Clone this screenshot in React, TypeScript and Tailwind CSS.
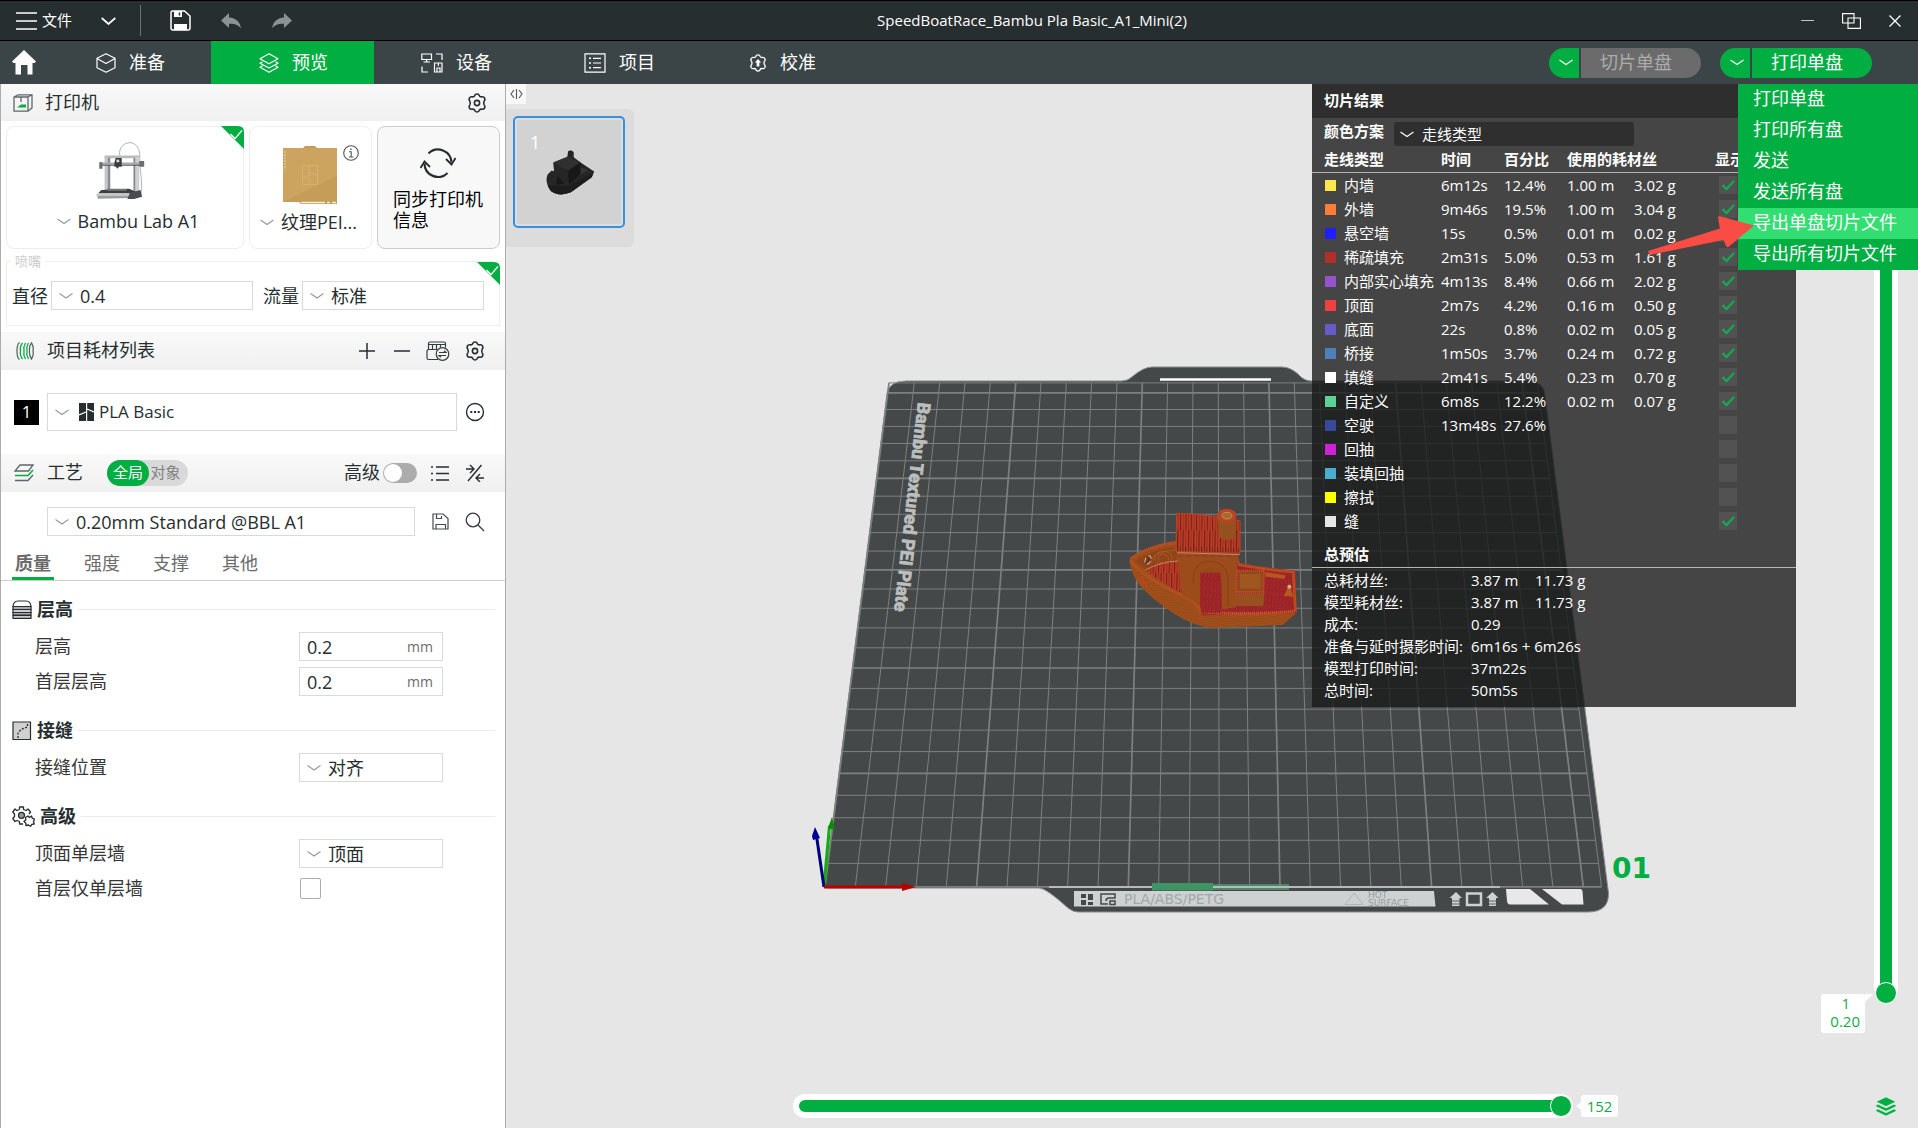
import type {ReactNode} from 'react';
import clsx from 'clsx';

const printMenu = ['打印单盘', '打印所有盘', '发送', '发送所有盘', '导出单盘切片文件', '导出所有切片文件'];

const lineTypes = [
    {name: '内墙', color: '#ffe64d', time: '6m12s', percent: '12.4%', length: '1.00 m', weight: '3.02 g', shown: true},
    {name: '外墙', color: '#ff7d38', time: '9m46s', percent: '19.5%', length: '1.00 m', weight: '3.04 g', shown: true},
    {name: '悬空墙', color: '#1f1fff', time: '15s', percent: '0.5%', length: '0.01 m', weight: '0.02 g', shown: true},
    {name: '稀疏填充', color: '#b03029', time: '2m31s', percent: '5.0%', length: '0.53 m', weight: '1.61 g', shown: true},
    {name: '内部实心填充', color: '#9654cc', time: '4m13s', percent: '8.4%', length: '0.66 m', weight: '2.02 g', shown: true},
    {name: '顶面', color: '#f04040', time: '2m7s', percent: '4.2%', length: '0.16 m', weight: '0.50 g', shown: true},
    {name: '底面', color: '#665cc7', time: '22s', percent: '0.8%', length: '0.02 m', weight: '0.05 g', shown: true},
    {name: '桥接', color: '#4d80ba', time: '1m50s', percent: '3.7%', length: '0.24 m', weight: '0.72 g', shown: true},
    {name: '填缝', color: '#ffffff', time: '2m41s', percent: '5.4%', length: '0.23 m', weight: '0.70 g', shown: true},
    {name: '自定义', color: '#5ed194', time: '6m8s', percent: '12.2%', length: '0.02 m', weight: '0.07 g', shown: true},
    {name: '空驶', color: '#38489b', time: '13m48s', percent: '27.6%', length: '', weight: '', shown: false},
    {name: '回抽', color: '#cd22d6', time: '', percent: '', length: '', weight: '', shown: false},
    {name: '装填回抽', color: '#49adcf', time: '', percent: '', length: '', weight: '', shown: false},
    {name: '擦拭', color: '#ffff00', time: '', percent: '', length: '', weight: '', shown: false},
    {name: '缝', color: '#e6e6e6', time: '', percent: '', length: '', weight: '', shown: true},
];

const totals = [
    ['总耗材丝:', '3.87 m', '11.73 g'],
    ['模型耗材丝:', '3.87 m', '11.73 g'],
    ['成本:', '0.29', ''],
    ['准备与延时摄影时间:', '6m16s + 6m26s', ''],
    ['模型打印时间:', '37m22s', ''],
    ['总时间:', '50m5s', ''],
];

const GEAR_PATH =
    'M7.6 2.8 Q8 1 10 1 Q12 1 12.4 2.8 Q13.2 4.1 14.7 3.8 Q16.6 3.3 17.6 5 Q18.5 6.7 17.2 8 Q16.2 10 17.2 12 Q18.5 13.3 17.6 15 Q16.6 16.7 14.7 16.2 Q13.2 15.9 12.4 17.2 Q12 19 10 19 Q8 19 7.6 17.2 Q6.8 15.9 5.3 16.2 Q3.4 16.7 2.4 15 Q1.5 13.3 2.8 12 Q3.8 10 2.8 8 Q1.5 6.7 2.4 5 Q3.4 3.3 5.3 3.8 Q6.8 4.1 7.6 2.8 Z';

function Chevron({className}: {className?: string}) {
    return (
        <svg viewBox="0 0 14 7" className={clsx('h-[7px] w-3.5 shrink-0', className)} fill="none" stroke="currentColor" strokeWidth="1.2">
            <path d="M.5 1 L7 5.5 L13.5 1" />
        </svg>
    );
}

function Gear({className}: {className?: string}) {
    return (
        <svg viewBox="0 0 20 20" className={clsx('size-5 shrink-0', className)} fill="none" stroke="currentColor" strokeWidth="1.6" strokeLinejoin="round">
            <path d={GEAR_PATH} />
            <circle cx="10" cy="10" r="2.6" />
        </svg>
    );
}

function CornerCheck({className}: {className?: string}) {
    return (
        <svg viewBox="0 0 23 23" className={clsx('absolute size-[23px]', className)}>
            <path d="M0 0 H17 Q23 0 23 6 V23 Z" fill="#00ae42" />
            <path d="M9.5 8 L14 12.5 L21 4.5" fill="none" stroke="#fff" strokeWidth="1.2" />
        </svg>
    );
}

function Select({id, label, value, className}: {id: string; label: string; value: string; className?: string}) {
    return (
        <div className={clsx('relative h-[29px] text-lg', className)}>
            <select id={id} aria-label={label} defaultValue={value} className="size-full appearance-none border border-[#d9d9d9] bg-white pr-2 pl-7 text-[#262e30] outline-none">
                <option>{value}</option>
            </select>
            <Chevron className="pointer-events-none absolute top-1/2 left-2 -translate-y-1/2 text-[#9a9a9a]" />
        </div>
    );
}

function TitleBar() {
    return (
        <header className="flex h-[41px] items-center border-y border-black bg-[#262e30] text-white">
            <div className="flex h-full w-[292px] items-center">
                <button className="ml-4 flex items-center gap-[5px] text-[15px]">
                    <svg viewBox="0 0 21 18" className="h-[18px] w-[21px]" stroke="#fff" strokeWidth="1.6">
                        <path d="M0 1 H21 M0 9 H21 M0 17 H21" />
                    </svg>
                    文件
                </button>
                <button aria-label="更多" className="ml-[29px]">
                    <svg viewBox="0 0 15 8" className="h-2 w-[15px]" fill="none" stroke="#fff" strokeWidth="1.7"><path d="M.7 1 L7.5 7 L14.3 1" /></svg>
                </button>
                <div className="ml-6 h-[31px] w-px bg-[#6b7173]" />
                <button aria-label="保存" className="ml-[29px]">
                    <svg viewBox="0 0 21 21" className="size-[21px]" fill="none" stroke="#fff" strokeWidth="1.5">
                        <path d="M2.5 1 H14.5 L20 6 V18 Q20 20 18 20 H3 Q1 20 1 18 V2.5 Q1 1 2.5 1 Z" />
                        <path d="M4 1 H12 V7 H4 Z M4 14 H17 V20 H4 Z" fill="#fff" stroke="none" />
                        <path d="M9.5 2.5 V5.5" stroke="#262e30" />
                    </svg>
                </button>
                <button aria-label="撤销" className="ml-[30px]">
                    <svg viewBox="0 0 20 16" className="h-4 w-5" fill="#8d9293"><path d="M8 0 V4.5 C15 5 19 9 20 15.5 C17 11.5 13 10.5 8 10.7 V15 L0 7.5 Z" /></svg>
                </button>
                <button aria-label="重做" className="ml-[31px]">
                    <svg viewBox="0 0 20 16" className="h-4 w-5" fill="#8d9293"><path d="M12 0 V4.5 C5 5 1 9 0 15.5 C3 11.5 7 10.5 12 10.7 V15 L20 7.5 Z" /></svg>
                </button>
            </div>
            <h1 className="flex-1 text-center text-[15px]">SpeedBoatRace_Bambu Pla Basic_A1_Mini(2)</h1>
            <div className="flex w-[146px] items-center justify-end gap-7 pr-[17px]">
                <button aria-label="最小化" className="h-px w-[13px] bg-[#c3c6c7]" />
                <button aria-label="还原">
                    <svg viewBox="0 0 19 16" className="h-4 w-[19px]" fill="none" stroke="#fff" strokeWidth="1.1"><path d="M.6 .6 H12 V10 H.6 Z M6 5 H18.4 V15.4 H6 Z" /></svg>
                </button>
                <button aria-label="关闭">
                    <svg viewBox="0 0 12 12" className="size-3" stroke="#fff" strokeWidth="1.3"><path d="M.5 .5 L11.5 11.5 M11.5 .5 L.5 11.5" /></svg>
                </button>
            </div>
        </header>
    );
}

function NavTab({label, active, children}: {label: string; active?: boolean; children: ReactNode}) {
    return (
        <button className={clsx('flex w-[163px] items-center justify-center gap-[13px] pl-0.5 text-lg', active && 'bg-[#00ae42]')}>
            {children}
            <span className="pb-0.5">{label}</span>
        </button>
    );
}

function NavBar() {
    return (
        <nav className="flex h-[43px] bg-[#3b4446] text-white">
            <button aria-label="主页" className="w-12 pl-3">
                <svg viewBox="0 0 24 25" className="h-[25px] w-6" fill="#fff"><path d="M12 0 L24 11.5 L22.5 13 H20.5 V24.5 H15.5 V15 H9 V24.5 H3.5 V13 H1.5 L0 11.5 Z" /></svg>
            </button>
            <NavTab label="准备">
                <svg viewBox="0 0 20 20" className="size-5" fill="none" stroke="currentColor" strokeWidth="1.2" strokeLinejoin="round">
                    <path d="M10 .7 L19 5.2 V14.8 L10 19.3 L1 14.8 V5.2 Z M1 5.4 L10 10.5 L19 5.4" />
                </svg>
            </NavTab>
            <NavTab label="预览" active>
                <svg viewBox="0 0 20 20" className="size-5" fill="none" stroke="currentColor" strokeWidth="1.2" strokeLinejoin="round">
                    <path d="M10 .8 L19 5.8 L10 10.8 L1 5.8 Z M3.5 8.8 L1 10.2 L10 15 L19 10.2 L16.5 8.8 M3.5 12.8 L1 14.3 L10 19.2 L19 14.3 L16.5 12.8" />
                </svg>
            </NavTab>
            <NavTab label="设备">
                <svg viewBox="0 0 22 20" className="h-5 w-[22px]" fill="none" stroke="currentColor" strokeWidth="1.2">
                    <path d="M.8 1 H10.5 V6.5 H.8 Z M5.6 6.5 V9 M2.5 9 H9 M15 1 H21 V7 M1 13.5 V19 H7 M13.5 10 H21 V19 H13.5 Z M16 19 V15 H19 V19 M17.3 10 V13" />
                </svg>
            </NavTab>
            <NavTab label="项目">
                <svg viewBox="0 0 22 20" className="h-5 w-[22px]" fill="none" stroke="currentColor" strokeWidth="1.2">
                    <path d="M1 .8 H21 V19.2 H1 Z M9 5.3 H17 M9 10 H17 M9 14.7 H17" />
                    <path d="M5 5.3 H7 M5 10 H7 M5 14.7 H7" strokeWidth="1.6" />
                </svg>
            </NavTab>
            <NavTab label="校准">
                <svg viewBox="0 0 20 20" className="size-[18px]" fill="none" stroke="currentColor" strokeWidth="1.5" strokeLinejoin="round">
                    <path d={GEAR_PATH} />
                    <path d="M10 5.5 L13.5 9.5 H11.5 V14 H8.5 V9.5 H6.5 Z" fill="currentColor" stroke="none" />
                </svg>
            </NavTab>
            <div className="ml-auto flex items-center gap-[19px] pr-[46px] text-lg">
                <div className="flex h-[30px] gap-0.5">
                    <button aria-label="切片选项" className="flex w-[30px] items-center justify-center rounded-l-full bg-[#00ae42] pl-1"><Chevron /></button>
                    <button disabled className="w-[120px] rounded-r-full bg-[#6b6b6b] pr-2.5 pb-0.5 text-[#acacac]">切片单盘</button>
                </div>
                <div className="relative flex h-[30px] gap-0.5">
                    <button aria-label="打印选项" className="flex w-[30px] items-center justify-center rounded-l-full bg-[#00ae42] pl-1"><Chevron /></button>
                    <button className="w-[120px] rounded-r-full bg-[#00ae42] pr-2.5 pb-0.5">打印单盘</button>
                    <PrintMenu />
                </div>
            </div>
        </nav>
    );
}

function PrintMenu() {
    return (
        <div className="absolute top-9 -right-[46px] z-20 w-[180px] bg-[#00ae42]">
            <ul>
                {printMenu.map((item) => (
                    <li key={item}>
                        <button className={clsx('h-[31px] w-full pb-0.5 pl-[15px] text-left', item === '导出单盘切片文件' && 'bg-[#32de72]')}>{item}</button>
                    </li>
                ))}
            </ul>
            <svg viewBox="0 0 106 40" className="absolute top-[132px] -left-[90px] h-10 w-[106px]">
                <path d="M0 35 L72 12.5 L70 1.5 Q70 -.5 73 .5 L106 9.5 L81 30.5 Q79 32 78 30 L75.5 24 L1.5 39 Z" fill="#f84c44" />
            </svg>
        </div>
    );
}

function PanelHeader({children, className}: {children: ReactNode; className?: string}) {
    return (
        <div className={clsx('flex items-center bg-linear-to-b from-[#f9f9f9] to-[#f0f0f0] text-lg', className)}>{children}</div>
    );
}

function PrinterPicture() {
    return (
        <svg viewBox="235 425 120 175" preserveAspectRatio="none" className="mr-2.5 h-[58px] w-[49px]">
            <path d="M293 466 C290 440 305 427 318 427 C336 428 344 450 342 475 C343 520 350 550 345 580" fill="none" stroke="#777" strokeWidth="1.5" />
            <path d="M256 466 H342 V474 H256 Z" fill="#b9babd" />
            <path d="M256 470 H269 V578 H256 Z" fill="#c5c6c9" />
            <path d="M264 472 H270 V572 H264 Z" fill="#8b8c90" />
            <path d="M327 470 H341 V578 H327 Z" fill="#cfd0d3" />
            <path d="M327 472 H331 V572 H327 Z" fill="#85868a" />
            <path d="M245 487 H352 V494 H245 Z" fill="#a8a9ad" />
            <path d="M245 494 H350 V497 H245 Z" fill="#55565a" />
            <path d="M243 486 H251 V506 H243 Z M341 482 H353 V500 H341 Z" fill="#6c6d71" />
            <path d="M283 473 H298 V500 H290 V504 H285 V500 H280 V488 Z" fill="#3a3b3f" />
            <path d="M285 478 H292 V486 H285 Z" fill="#d8d8da" />
            <path d="M248 570 L316 566 L332 574 V580 H240 Z" fill="#3e3f43" />
            <path d="M262 566 H310 V572 H262 Z" fill="#77787c" />
            <path d="M236 581 H326 V594 L240 596 Z" fill="#9c9da1" />
            <path d="M236 583 H322 V587 H236 Z" fill="#d4d5d8" />
            <path d="M318 578 L344 570 L348 590 L328 597 H312 Z" fill="#4b4c50" />
        </svg>
    );
}

function PrinterCards() {
    return (
        <div className="flex h-[128px] gap-[5px] px-[5px] pt-[5px] text-lg text-[#262e30]">
            <div className="relative flex flex-1 flex-col items-center rounded-lg border border-[#eee] pt-[15px]">
                <PrinterPicture />
                <button className="mt-[7px] flex items-center gap-[7px] pl-1.5"><Chevron className="text-[#9a9a9a]" />Bambu Lab A1</button>
                <CornerCheck className="-top-px -right-px" />
            </div>
            <div className="relative flex w-[123px] flex-col items-center rounded-lg border border-[#eee] pt-[19px]">
                <svg viewBox="0 0 54 58" className="mr-0.5 h-[58px] w-[54px]">
                    <path d="M0 2 H20 L22 0 H32 L34 2 H54 V58 H18 L16 56 H0 Z" fill="#c59c58" />
                    <path d="M0 2 H54 V30 L0 56 Z" fill="#d2aa66" opacity=".55" />
                    <path d="M19.5 19.5 H34.5 V38.5 H19.5 Z M26 19.5 V38.5 M19.5 33 L26 29 M26 26 L34.5 30" fill="none" stroke="#d8b87c" strokeWidth=".7" />
                    <path d="M18 56.5 H42 M44 56.5 H47 M49 56.5 H53" stroke="#f6ecd8" strokeWidth="1.5" />
                    <path d="M2 5 V24" stroke="#e8d2a6" strokeWidth="1" strokeDasharray="2 1" />
                </svg>
                <svg viewBox="0 0 16 16" className="absolute top-[18px] right-3 size-4" fill="none" stroke="#555" strokeWidth="1.1">
                    <circle cx="8" cy="8" r="7.3" />
                    <path d="M6 6.8 H8.2 V12 M6 12 H10.5" />
                    <path d="M7.2 4.3 H8.6" strokeWidth="1.6" />
                </svg>
                <button className="mt-1 flex items-center gap-[7px] pr-1 whitespace-nowrap"><Chevron className="text-[#9a9a9a]" />纹理PEI...</button>
            </div>
            <button className="flex w-[123px] flex-col rounded-lg border border-[#ccc] bg-[#f8f8f8] px-[15px] pt-[21px] text-left leading-[21px] text-black">
                <svg viewBox="0 0 36 30" className="mb-[11px] ml-[27px] h-[30px] w-9" fill="none" stroke="#262e30" strokeWidth="2.2">
                    <path d="M8.5 5.5 A13.5 13.5 0 0 1 31.5 14.5" />
                    <path d="M27.5 25 A13.5 13.5 0 0 1 4.5 15.5" />
                    <path d="M26 11 L31.5 16.5 L35.5 10 M10 19 L4.5 13.5 L.5 20" strokeWidth="1.8" />
                </svg>
                同步打印机信息
            </button>
        </div>
    );
}

function SectionTitle({title, children}: {title: string; children: ReactNode}) {
    return (
        <h3 className="flex h-10 items-center gap-[5px] pr-[10px] pl-[11px] text-lg font-bold">
            {children}
            {title}
            <span className="h-px flex-1 bg-[#ececec]" />
        </h3>
    );
}

function Field({id, label, children}: {id: string; label: string; children: ReactNode}) {
    return (
        <div className="flex h-[35px] items-center pl-[34px]">
            <label htmlFor={id} className="w-[264px] pb-0.5 text-lg text-[#363636]">{label}</label>
            {children}
        </div>
    );
}

function NumberField({id, label}: {id: string; label: string}) {
    return (
        <Field id={id} label={label}>
            <div className="flex h-[29px] w-36 items-center border border-[#d9d9d9] pr-[9px] pl-[7px]">
                <input id={id} defaultValue="0.2" className="min-w-0 flex-1 text-lg outline-none" />
                <span className="text-sm text-[#6b6b6b]">mm</span>
            </div>
        </Field>
    );
}

function Sidebar() {
    return (
        <aside className="w-[506px] shrink-0 border-r border-l border-[#acacac] bg-white text-[#262e30]">
            <PanelHeader className="h-[37px] pr-[18px] pl-3">
                <svg viewBox="0 0 20 18" className="mr-3 h-[18px] w-5" fill="none" stroke="#5f6668" strokeWidth="1.3">
                    <path d="M1 3 L5 .8 H19 V14 L15 17.2 H1 Z M1 3 H15 V17 M15 3 L19 .8 M8 3 V8" />
                    <path d="M6 12 L8 10.5 H13 V13.5 H4 Z" fill="#00ae42" stroke="none" />
                </svg>
                <h2 className="pb-0.5">打印机</h2>
                <button aria-label="打印机设置" className="ml-auto"><Gear /></button>
            </PanelHeader>
            <PrinterCards />
            <fieldset className="relative mx-[5px] mt-1 h-[73px] border border-[#eee]">
                <legend className="ml-1 px-1 text-[13px] leading-4 text-[#ccc]">喷嘴</legend>
                <div className="flex items-center pt-3 pl-[5px] text-lg">
                    <label htmlFor="diameter">直径</label>
                    <Select id="diameter" label="直径" value="0.4" className="ml-[3px] w-[202px]" />
                    <label htmlFor="flow" className="ml-2.5">流量</label>
                    <Select id="flow" label="流量" value="标准" className="ml-[3px] w-[182px]" />
                </div>
                <CornerCheck className="-top-[7px] -right-px" />
            </fieldset>
            <PanelHeader className="mt-1.5 h-[38px] pr-5 pl-[15px]">
                <svg viewBox="0 0 18 18" className="mr-[13px] size-[18px]" fill="none" stroke="#5f6668" strokeWidth="1.3">
                    <path d="M3.5 .5 Q1 2 1 9 Q1 16 3.5 17.5" />
                    <path d="M15.5 .8 Q18 5 17 9 Q18 13 15.5 17.2 Q13 13 13.5 9 Q13 4 15.5 .8 Z" />
                    <path d="M6.5 1 Q3.5 5 4.5 9 Q3.5 13 6.5 17 M9.5 1 Q7 5 8 9 Q7 13 9.5 17 M12.5 1 Q10 5 11 9 Q10 13 12.5 17" stroke="#00ae42" />
                </svg>
                <h2 className="pb-0.5">项目耗材列表</h2>
                <div className="ml-auto flex items-center gap-4">
                    <button aria-label="添加耗材" className="mr-[3px]"><svg viewBox="0 0 16 16" className="size-4" stroke="#262e30" strokeWidth="1.5"><path d="M0 8 H16 M8 0 V16" /></svg></button>
                    <button aria-label="移除耗材"><svg viewBox="0 0 16 16" className="size-4" stroke="#262e30" strokeWidth="1.5"><path d="M0 8 H16" /></svg></button>
                    <button aria-label="同步耗材">
                        <svg viewBox="0 0 24 20" className="h-5 w-6" fill="none" stroke="#363c3e" strokeWidth="1.2">
                            <path d="M2.5 8.5 V2.5 Q2.5 1 4 1 H18 Q19.5 1 19.5 2.5 V6.5 M1 17 V10.5 Q1 8.5 3 8.5 H11 M1 17 Q1 18.5 2.5 18.5 H12 M6.5 3.5 V8.5 M10.5 3.5 V8.5 M14.5 3.5 V6.5 M2.5 3.5 H19.5" />
                            <circle cx="16.5" cy="13" r="6.3" />
                            <path d="M13 11.5 H20 L18 9.7 M20 14.5 H13 L15 16.3" />
                        </svg>
                    </button>
                    <button aria-label="耗材设置" className="-ml-px"><Gear /></button>
                </div>
            </PanelHeader>
            <div className="flex h-[84px] items-center pr-5 pl-[13px]">
                <span className="size-[25px] bg-black text-center text-[17px] leading-[23px] text-white">1</span>
                <div className="relative ml-2 h-[38px] flex-1">
                    <select aria-label="耗材" defaultValue="PLA Basic" className="size-full appearance-none border border-[#d9d9d9] bg-white pl-[51px] text-[17px]">
                        <option>PLA Basic</option>
                    </select>
                    <Chevron className="pointer-events-none absolute top-4 left-2 text-[#9a9a9a]" />
                    <svg viewBox="0 0 15 18" className="pointer-events-none absolute top-2.5 left-8 h-[18px] w-[15px]">
                        <path d="M0 0 H7 V18 H0 Z M8.2 0 H15 V18 H8.2 Z" fill="#262e30" />
                        <path d="M0 12 L7 9 M8 6 L15 9" stroke="#fff" strokeWidth="1.3" />
                    </svg>
                </div>
                <button aria-label="编辑耗材" className="ml-2">
                    <svg viewBox="0 0 20 20" className="size-5" fill="none" stroke="#262e30" strokeWidth="1.4">
                        <circle cx="10" cy="10" r="8.5" />
                        <path d="M5.3 10 H7.3 M9 10 H11 M12.7 10 H14.7" strokeWidth="1.8" />
                    </svg>
                </button>
            </div>
            <PanelHeader className="h-[38px] pr-5 pl-[13px]">
                <svg viewBox="0 0 20 18" className="mr-[13px] h-[18px] w-5" fill="none" stroke="#5f6668" strokeWidth="1.3">
                    <path d="M6 1 H19 L14.5 7 H1 Z" />
                    <path d="M1 11.5 H14 L19 6" stroke="#00ae42" strokeWidth="1.6" />
                    <path d="M1 16.5 H14 L19 11" />
                </svg>
                <h2 className="pb-0.5">工艺</h2>
                <div className="ml-6 flex h-[26px] w-[81px] rounded-full bg-[#d9d9d9] text-[15px]">
                    <button className="w-[42px] rounded-full bg-[#00ae42] text-white">全局</button>
                    <button className="flex-1 pr-1.5 text-[#7c8282]">对象</button>
                </div>
                <label className="ml-auto flex items-center gap-[3px]">
                    <span className="pb-0.5">高级</span>
                    <input type="checkbox" role="switch" className="sr-only" />
                    <span className="flex h-5 w-[34px] items-center rounded-full bg-[#acacac] px-px"><span className="size-[18px] rounded-full bg-white" /></span>
                </label>
                <button aria-label="参数表" className="ml-3.5">
                    <svg viewBox="0 0 18 15" className="h-[15px] w-[18px]" stroke="#262e30" strokeWidth="1.6"><path d="M0 1 H2 M0 7.5 H2 M0 14 H2 M5 1 H18 M5 7.5 H18 M5 14 H18" /></svg>
                </button>
                <button aria-label="对比参数" className="ml-4">
                    <svg viewBox="0 0 20 18" className="h-[18px] w-5" fill="none" stroke="#262e30" strokeWidth="1.4">
                        <path d="M16.5 1 L3 17 M1 5 H8 M5 1 L9 5 L5 9 M19 14 H12 M15 10 L11 14 L15 18" />
                    </svg>
                </button>
            </PanelHeader>
            <div className="flex items-center pt-[15px] pr-5 pl-[46px]">
                <Select id="process" label="工艺" value="0.20mm Standard @BBL A1" className="flex-1" />
                <button aria-label="保存工艺" className="ml-[17px]">
                    <svg viewBox="0 0 17 17" className="size-[17px]" fill="none" stroke="#464c4e" strokeWidth="1.2">
                        <path d="M1 1 H11 L16 5.5 V16 H1 Z M4.5 1 V5.5 H9.5 V3 M4 16 V11.5 H13.5 V16" />
                    </svg>
                </button>
                <button aria-label="搜索" className="ml-4">
                    <svg viewBox="0 0 20 20" className="size-5" fill="none" stroke="#363c3e" strokeWidth="1.3"><circle cx="8" cy="8" r="6.8" /><path d="M13 13 L19 19" /></svg>
                </button>
            </div>
            <div className="flex h-[45px] items-end gap-[27px] border-b border-[#ccc] pl-[11px] text-lg text-[#6b6b6b]">
                <button className="h-[31px] border-b-3 border-[#00ae42] px-[3px] font-bold">质量</button>
                <button className="h-[31px] border-b-3 border-transparent px-[3px]">强度</button>
                <button className="h-[31px] border-b-3 border-transparent px-[3px]">支撑</button>
                <button className="h-[31px] border-b-3 border-transparent px-[3px]">其他</button>
            </div>
            <div className="flex flex-col gap-[11px] pt-2">
                <section>
                    <SectionTitle title="层高">
                        <svg viewBox="0 0 20 19" className="h-[19px] w-5" stroke="#262e30" strokeWidth="1.2">
                            <path d="M1 6.5 Q1.5 1 6 1 H14 Q18.5 1 19 6.5 Z" fill="#fff" />
                            <path d="M1 6.5 H19 V9.5 H1 Z M1 12.5 H19 V15 H1 Z" fill="#aaa" />
                            <path d="M1 9.5 H19 V12.5 H1 Z M1 15.5 H19 V18.3 H1 Z" fill="#ccc" />
                        </svg>
                    </SectionTitle>
                    <NumberField id="layer-height" label="层高" />
                    <NumberField id="first-layer-height" label="首层层高" />
                </section>
                <section>
                    <SectionTitle title="接缝">
                        <svg viewBox="0 0 20 19" className="h-[19px] w-5">
                            <path d="M1 1 H18.5 V18.5 H1 Z" fill="#d0d0d0" stroke="#262e30" strokeWidth="1.2" />
                            <path d="M6 17 V12 L9 8.5 L15.5 6 V2" fill="none" stroke="#262e30" strokeWidth="1.3" strokeDasharray="2 1.5" />
                        </svg>
                    </SectionTitle>
                    <Field id="seam" label="接缝位置">
                        <Select id="seam" label="接缝位置" value="对齐" className="w-36" />
                    </Field>
                </section>
                <section>
                    <SectionTitle title="高级">
                        <svg viewBox="0 0 23 21" className="h-[21px] w-[23px]" fill="none" stroke="#262e30" strokeWidth="1.3" strokeLinejoin="round">
                            <path d="M7.5 3.5 V1 H11.5 V3.5 L14 4.5 L16 3 L18.5 6 L17 8 M7.5 3.5 L4.8 4.5 L3 3 L.8 6 L2.5 8 V10.5 L.8 12.5 L3 15.5 L5 14.5 L7.5 15.5 V18 H11" />
                            <circle cx="9.5" cy="9.3" r="3" fill="#999" />
                            <path d="M16 10 L17.5 11.5 L19.5 10 L20.3 12.3 L22.5 13 L21.5 15.5 L22.3 18 L19.8 18.3 L18.5 20.3 L16.5 19 L14 19.5 L13.8 17 L12 15.5 L13.8 13.8 L13.5 11.5 Z" fill="#fff" />
                        </svg>
                    </SectionTitle>
                    <Field id="top-wall" label="顶面单层墙">
                        <Select id="top-wall" label="顶面单层墙" value="顶面" className="w-36" />
                    </Field>
                    <Field id="first-wall" label="首层仅单层墙">
                        <input id="first-wall" type="checkbox" className="ml-px size-[21px] appearance-none rounded-[2px] border border-[#acacac] bg-white" />
                    </Field>
                </section>
            </div>
        </aside>
    );
}

// Build plate in perspective: u runs left to right, v front to back, both in cm.
const PLATE = 25.6;

function project(u: number, v: number) {
    const scale = 1 / (0.03297 + 0.0002543 * v);
    const y = 886.7 - (30.33 - scale) * 100.74;
    const x = 825 + (886.7 - y) * 0.12706 + u * scale;
    return `${x.toFixed(1)} ${y.toFixed(1)}`;
}

function Boat() {
    return (
        <g transform="translate(800 350) scale(.33333)">
            <defs>
                <pattern id="roof" width="16" height="130" patternUnits="userSpaceOnUse" patternTransform="rotate(1)">
                    <rect width="16" height="130" fill="#a8281f" />
                    <path d="M3 0 V130 M11 0 V130" stroke="#c94a28" strokeWidth="3" />
                    <path d="M7 0 V70 M15 50 V130" stroke="#5a2418" strokeWidth="3" />
                </pattern>
                <pattern id="deck" width="11" height="20" patternUnits="userSpaceOnUse" patternTransform="rotate(4)">
                    <rect width="11" height="20" fill="#a3222a" />
                    <path d="M2.5 0 V12 M8 9 V20" stroke="#7c2a20" strokeWidth="2.5" />
                    <path d="M5.5 4 V16" stroke="#bf2d2d" strokeWidth="2" />
                </pattern>
                <pattern id="hull" width="8" height="5" patternUnits="userSpaceOnUse" patternTransform="rotate(6)">
                    <rect width="8" height="5" fill="#a4501c" />
                    <path d="M0 1.5 H8" stroke="#8d4518" strokeWidth="1.5" />
                </pattern>
            </defs>
            <path d="M988 628 Q1040 584 1128 573 V604 L1312 612 L1320 640 Q1400 654 1486 662 L1490 788 L1448 825 L1230 834 Q1180 828 1120 790 Q1030 730 1003 682 Q990 650 988 628 Z" fill="url(#hull)" />
            <path d="M992 626 Q1045 588 1128 578" fill="none" stroke="#c24c26" strokeWidth="8" strokeDasharray="4 2" />
            <path d="M1004 634 Q1050 598 1130 590 V634 Q1080 636 1038 660 Z" fill="#8f4518" />
            <g fill="none" stroke="#b3602a" strokeWidth="2">
                <ellipse cx="1090" cy="626" rx="16" ry="13" />
                <ellipse cx="1090" cy="624" rx="26" ry="20" />
                <path d="M1052 640 Q1056 604 1128 600" />
            </g>
            <path d="M1038 660 Q1080 636 1134 634 L1146 730 Q1090 702 1038 660 Z" fill="url(#roof)" />
            <path d="M1036 660 Q1080 636 1134 633" fill="none" stroke="#e0a080" strokeWidth="2" />
            <path d="M992 632 Q1010 660 1060 690 Q1110 722 1160 742 Q1190 760 1204 788" fill="none" stroke="#c4521f" strokeWidth="8" strokeDasharray="3 2" />
            <ellipse cx="1044" cy="630" rx="8" ry="13" fill="#6e3413" stroke="#d6c6bc" strokeWidth="3" strokeDasharray="14 8" transform="rotate(25 1044 630)" />
            <path d="M1014 682 L1030 704 M1022 680 L1042 712" stroke="#c4421f" strokeWidth="4" />
            <path d="M1312 640 Q1400 654 1486 662 L1488 790 L1206 796 L1196 742 L1200 664 H1312 Z" fill="url(#deck)" />
            <path d="M1314 644 Q1400 660 1480 666 L1486 784" fill="none" stroke="#b84c20" strokeWidth="8" />
            <path d="M1206 786 Q1340 796 1484 784" fill="none" stroke="#c85628" strokeWidth="9" strokeDasharray="4 2" />
            <path d="M1130 604 H1312 L1308 772 L1266 778 L1264 690 Q1258 662 1230 662 Q1200 664 1200 690 V770 Q1180 750 1148 738 Z" fill="#9c4c1b" />
            <path d="M1180 700 Q1176 634 1230 634 Q1280 636 1284 690 V770" fill="none" stroke="#8c4418" strokeWidth="4" />
            <path d="M1200 668 H1262 L1264 788 H1204 Z" fill="url(#deck)" />
            <path d="M1200 668 Q1230 640 1264 668" fill="#96481a" />
            <path d="M1310 662 H1392 L1390 726 H1308 Z" fill="#8d4a1a" stroke="#c8442a" strokeWidth="6" strokeDasharray="4 2" />
            <path d="M1320 672 H1382 V716 H1320 Z" fill="#a0561f" />
            <path d="M1306 730 L1394 728 L1390 768 H1304 Z" fill="#985020" />
            <path d="M1396 666 L1456 676 L1454 686 L1396 680 Z M1452 738 L1468 700 L1480 740 Z" fill="#b5581f" />
            <circle cx="1468" cy="710" r="6" fill="#d8ab8a" />
            <path d="M1130 490 Q1200 492 1250 500 L1320 512 V610 L1128 604 Z" fill="url(#roof)" stroke="#b54522" strokeWidth="3" />
            <path d="M1132 608 L1320 614" stroke="#e3a184" strokeWidth="2" />
            <path d="M1134 618 H1310" stroke="#73304a" strokeWidth="2" strokeDasharray="16 8" />
            <path d="M1252 498 H1308 V560 Q1280 580 1256 560 Z" fill="#94501d" />
            <ellipse cx="1280" cy="497" rx="26" ry="18" fill="#a84e1f" stroke="#c23e28" strokeWidth="6" />
            <ellipse cx="1281" cy="497" rx="15" ry="10" fill="#a8682c" stroke="#dba27a" strokeWidth="2" />
        </g>
    );
}

function PlateScene() {
    const lines = Array.from({length: 26}, (_, i) => i);
    return (
        <svg viewBox="506 84 1412 1044" preserveAspectRatio="xMidYMid slice" className="absolute inset-0 size-full">
            <path
                d="M887 394 Q889 381 906 381 H1122 Q1128 381 1133 376 Q1144 367 1152 367 H1282 Q1290 367 1298 374 Q1304 381 1311 381 H1530 Q1544 382 1545 396 L1608.5 893 Q1609 912 1588 912 H1078 Q1073 912 1068 908 Q1046 888 1039 888 H828 Q824 888 825 883 Z"
                fill="#444848"
                stroke="#8a8e8e"
                strokeWidth="1"
            />
            <path d="M1160 379.5 H1271" stroke="#fff" strokeWidth="2.5" />
            <g fill="none" stroke="#7d807f">
                {lines.map((i) => (
                    <path key={i} d={`M${project(i, 0)} L${project(i, PLATE)} M${project(0, i)} L${project(PLATE, i)}`} strokeWidth={i % 5 === 0 ? 1.7 : 1} />
                ))}
                <path d={`M${project(0, PLATE)} L${project(PLATE, PLATE)} L${project(PLATE, 0)}`} />
            </g>
            <path d="M1049 887 H1500" stroke="#b5baba" strokeWidth="2" />
            <path d="M1074 891 H1434 L1435.5 906.5 H1074 Z" fill="#cdd1d2" />
            <path d="M1081 894 H1086 V898 H1081 Z M1088 894 H1093 V900 H1088 Z M1081 900 H1086 V905 H1081 Z M1088 902 H1093 V905 H1088 Z" fill="#444848" />
            <path d="M1108 904 H1101 V894 H1115 V898 H1109 Q1106 898 1106 901 M1110 901 H1115 V904.5 H1110 Z" fill="none" stroke="#444848" strokeWidth="1.5" />
            <text x="1124" y="904" fontSize="14" fill="#a2a7a8" fontFamily="DejaVu Sans">PLA/ABS/PETG</text>
            <path d="M1354 893 L1363 904.5 H1345 Z" fill="none" stroke="#aeb3b4" />
            <text x="1368" y="898" fontSize="9" fill="#969b9c" fontFamily="DejaVu Sans">HOT</text>
            <text x="1368" y="905.5" fontSize="9" fill="#969b9c" fontFamily="DejaVu Sans">SURFACE</text>
            <g fill="#cdd1d2">
                <path d="M1456 892 L1462 898 H1459.5 V906 H1452 V898 H1449.5 Z M1492.5 892 L1498.5 898 H1496 V906 H1489 V898 H1486 Z" />
                <path d="M1467 893.5 H1481 V905 H1467 Z" fill="none" stroke="#cdd1d2" strokeWidth="2.5" />
                <path d="M1451 901 H1461 M1451 904 H1461 M1488 901 H1498 M1488 904 H1498" stroke="#444848" strokeWidth=".8" />
            </g>
            <path d="M1506 889 H1530 L1549 904.5 H1510 Q1507.5 904.5 1507 901 Z M1542 889 H1580 Q1582 889 1582.5 891 L1583.5 904.5 H1562 Z" fill="#e8e8e8" />
            <path d="M1152 883 H1213 V890.5 H1152 Z" fill="#3f9465" />
            <path d="M1213 885 H1289 M1213 889 H1289" stroke="#4f9b70" strokeWidth="1.5" />
            <text transform="translate(918 402) rotate(96.5)" fontSize="18" fontWeight="bold" fill="#bcbebe" stroke="#bcbebe" strokeWidth=".8" fontFamily="Roboto, sans-serif">Bambu Textured PEI Plate</text>
            <text x="1612" y="878" fontSize="28" fontWeight="bold" fill="#00ae42" fontFamily="DejaVu Sans">01</text>
            <Boat />
            <path d="M824 886 L829.5 826" stroke="#0fae0f" strokeWidth="3" />
            <path d="M832 817 L835 830 L828 828 Z" fill="#078c07" />
            <path d="M824 887 L816.5 836" stroke="#00007a" strokeWidth="3" />
            <path d="M815 827 L820 838 L813 840 L812 836 Z" fill="#00009a" />
            <path d="M824 887 H904" stroke="#b80000" strokeWidth="3" />
            <path d="M902 883 L916 887 L902 891 Z" fill="#b80000" />
        </svg>
    );
}

function PlateThumbnail() {
    return (
        <div className="absolute top-[25px] left-0 h-[138px] w-32 rounded-r-md bg-[#dcdcdc] pt-[7px] pl-[7px]">
            <button aria-label="盘 1" className="relative block size-28 rounded-[5px] border-2 border-[#3b8fdc] bg-[#d9dfe5] p-0.5">
                <div className="size-full bg-[#d2d2d2]" />
                <span className="absolute top-3 left-[15px] text-lg leading-6 text-white">1</span>
                <svg viewBox="1338 448 122 136" preserveAspectRatio="none" className="absolute top-8 left-[31px] h-[45px] w-[49px]">
                    <path d="M1391 470 L1393 452 L1400 449 L1407 454 V470 L1424 486 L1458 513 L1452 530 L1400 576 Q1370 590 1350 572 Q1334 545 1342 522 L1352 510 L1358 512 L1356 486 Z" fill="#262626" />
                    <path d="M1356 486 L1392 468 L1424 484 L1392 510 Z" fill="#303030" />
                    <path d="M1392 512 L1424 486 V520 L1396 552 Z M1366 526 L1384 550 L1364 552 Z" fill="#181818" />
                    <path d="M1342 556 L1396 556 L1456 516 L1452 530 L1400 576 Q1370 590 1350 572 Z" fill="#1d1d1d" />
                    <path d="M1424 500 L1442 508 L1424 524 Z" fill="#363636" />
                </svg>
            </button>
        </div>
    );
}

function SliceResult() {
    return (
        <section className="absolute top-0 right-[122px] w-[484px] bg-[#191919]/79 pb-1.5 text-[15px] text-white">
            <h2 className="h-[34px] bg-[#2e2e2e] pl-3 leading-[33px] font-bold">切片结果</h2>
            <div className="flex h-7 items-start gap-2.5 pt-1 pl-3">
                <label htmlFor="scheme" className="leading-[18px] font-bold">颜色方案</label>
                <div className="relative h-6 w-60">
                    <select id="scheme" className="size-full appearance-none rounded-[3px] bg-[#2f2f2f] pl-7 text-white">
                        <option>走线类型</option>
                    </select>
                    <Chevron className="pointer-events-none absolute top-[9px] left-1.5" />
                </div>
            </div>
            <table className="w-full table-fixed text-left whitespace-nowrap">
                <colgroup>
                    <col className="w-[129px]" />
                    <col className="w-[63px]" />
                    <col className="w-[63px]" />
                    <col className="w-[67px]" />
                    <col className="w-[81px]" />
                    <col />
                </colgroup>
                <thead>
                    <tr className="h-[26px] border-b border-[#b5b5b5]">
                        <th className="pl-3">走线类型</th>
                        <th>时间</th>
                        <th>百分比</th>
                        <th colSpan={2}>使用的耗材丝</th>
                        <th>显示</th>
                    </tr>
                </thead>
                <tbody>
                    {lineTypes.map((line) => (
                        <tr key={line.name} className="h-6 leading-6">
                            <td className="pl-3">
                                <span className="mr-2 ml-px inline-block size-[11px]" style={{backgroundColor: line.color}} />
                                {line.name}
                            </td>
                            <td>{line.time}</td>
                            <td>{line.percent}</td>
                            <td>{line.length}</td>
                            <td>{line.weight}</td>
                            <td>
                                <label className="relative ml-1 block size-[18px]">
                                    <input type="checkbox" aria-label={line.name} defaultChecked={line.shown} className="peer block size-[18px] appearance-none bg-[#525252]" />
                                    <svg viewBox="0 0 18 18" className="pointer-events-none absolute inset-0 hidden size-[18px] peer-checked:block" fill="none" stroke="#13a94b" strokeWidth="2.4">
                                        <path d="M3.5 9 L7.5 13 L15 5" />
                                    </svg>
                                </label>
                            </td>
                        </tr>
                    ))}
                </tbody>
            </table>
            <h3 className="h-[35px] border-b border-[#b5b5b5] pt-2.5 pl-3 font-bold">总预估</h3>
            <dl className="pt-px pl-3 leading-[22px]">
                {totals.map(([label, value, weight]) => (
                    <div key={label} className="flex whitespace-nowrap">
                        <dt className="w-[147px]">{label}</dt>
                        <dd className={clsx(weight && 'w-16')}>{value}</dd>
                        {weight && <dd>{weight}</dd>}
                    </div>
                ))}
            </dl>
        </section>
    );
}

function LayerSlider() {
    return (
        <div className="absolute top-10 right-5 bottom-[129px] flex w-6 justify-center rounded-full bg-white">
            <input
                type="range"
                aria-label="层"
                min="1"
                max="100"
                defaultValue="1"
                className="h-full w-3 appearance-none rounded-full bg-[#00ae42] [direction:rtl] [writing-mode:vertical-lr] [&::-webkit-slider-thumb]:-mx-[5px] [&::-webkit-slider-thumb]:size-[22px] [&::-webkit-slider-thumb]:appearance-none [&::-webkit-slider-thumb]:rounded-full [&::-webkit-slider-thumb]:border [&::-webkit-slider-thumb]:border-white [&::-webkit-slider-thumb]:bg-[#00ae42]"
            />
            <div className="absolute right-[33px] -bottom-[34px] h-[39px] w-11 rounded-[3px] bg-white pr-[5px] text-right text-[15px] leading-[18px] text-[#13a94b]">
                <p className="pr-2.5">1</p>
                <p>0.20</p>
                <svg viewBox="0 0 8 8" className="absolute top-0 -right-2 size-2"><path d="M0 0 H8 L0 8 Z" fill="#fff" /></svg>
            </div>
        </div>
    );
}

function StepSlider() {
    return (
        <div className="absolute right-[345px] bottom-2.5 left-[287px] flex h-6 items-center rounded-full bg-white pr-px pl-1.5">
            <input
                type="range"
                aria-label="步骤"
                min="1"
                max="152"
                defaultValue="152"
                className="h-3 w-full appearance-none rounded-full bg-[#00ae42] [&::-webkit-slider-thumb]:size-[22px] [&::-webkit-slider-thumb]:appearance-none [&::-webkit-slider-thumb]:rounded-full [&::-webkit-slider-thumb]:border [&::-webkit-slider-thumb]:border-white [&::-webkit-slider-thumb]:bg-[#00ae42]"
            />
            <div className="absolute top-px -right-[45px] h-[22px] w-[37px] rounded-[3px] bg-white text-center text-[15px] leading-[22px] text-[#13a94b]">
                152
                <svg viewBox="0 0 5 8" className="absolute top-[7px] -left-[5px] h-2 w-[5px]"><path d="M5 0 V8 L0 4 Z" fill="#fff" /></svg>
            </div>
        </div>
    );
}

export default function App() {
    return (
        <div className="flex h-screen flex-col overflow-hidden font-['Open_Sans','Noto_Sans_CJK_SC',sans-serif]">
            <TitleBar />
            <NavBar />
            <div className="flex min-h-0 flex-1">
                <Sidebar />
                <main className="relative flex-1 overflow-hidden bg-[#e6e6e6]">
                    <PlateScene />
                    <button aria-label="折叠侧栏" className="absolute top-0 left-0 flex h-5 w-5 items-center justify-center bg-[#f8f8f8]">
                        <svg viewBox="0 0 13 10" className="h-2.5 w-[13px]" fill="none" stroke="#555" strokeWidth="1.1"><path d="M4 1 L1 5 L4 9 M9 1 L12 5 L9 9 M6.5 0 V10" /></svg>
                    </button>
                    <PlateThumbnail />
                    <SliceResult />
                    <LayerSlider />
                    <StepSlider />
                    <button aria-label="图层视图" className="absolute right-[22px] bottom-3">
                        <svg viewBox="0 0 20 19" className="h-[19px] w-5">
                            <path d="M10 0 L20 4.7 L10 9.5 L0 4.7 Z M0 8 L2 7.2 L10 11 L18 7.2 L20 8 V9.5 L10 14.2 L0 9.5 Z M0 12.8 L2 12 L10 15.8 L18 12 L20 12.8 V14.2 L10 19 L0 14.2 Z" fill="#00ae42" stroke="#fff" strokeWidth=".5" />
                        </svg>
                    </button>
                </main>
            </div>
        </div>
    );
}
